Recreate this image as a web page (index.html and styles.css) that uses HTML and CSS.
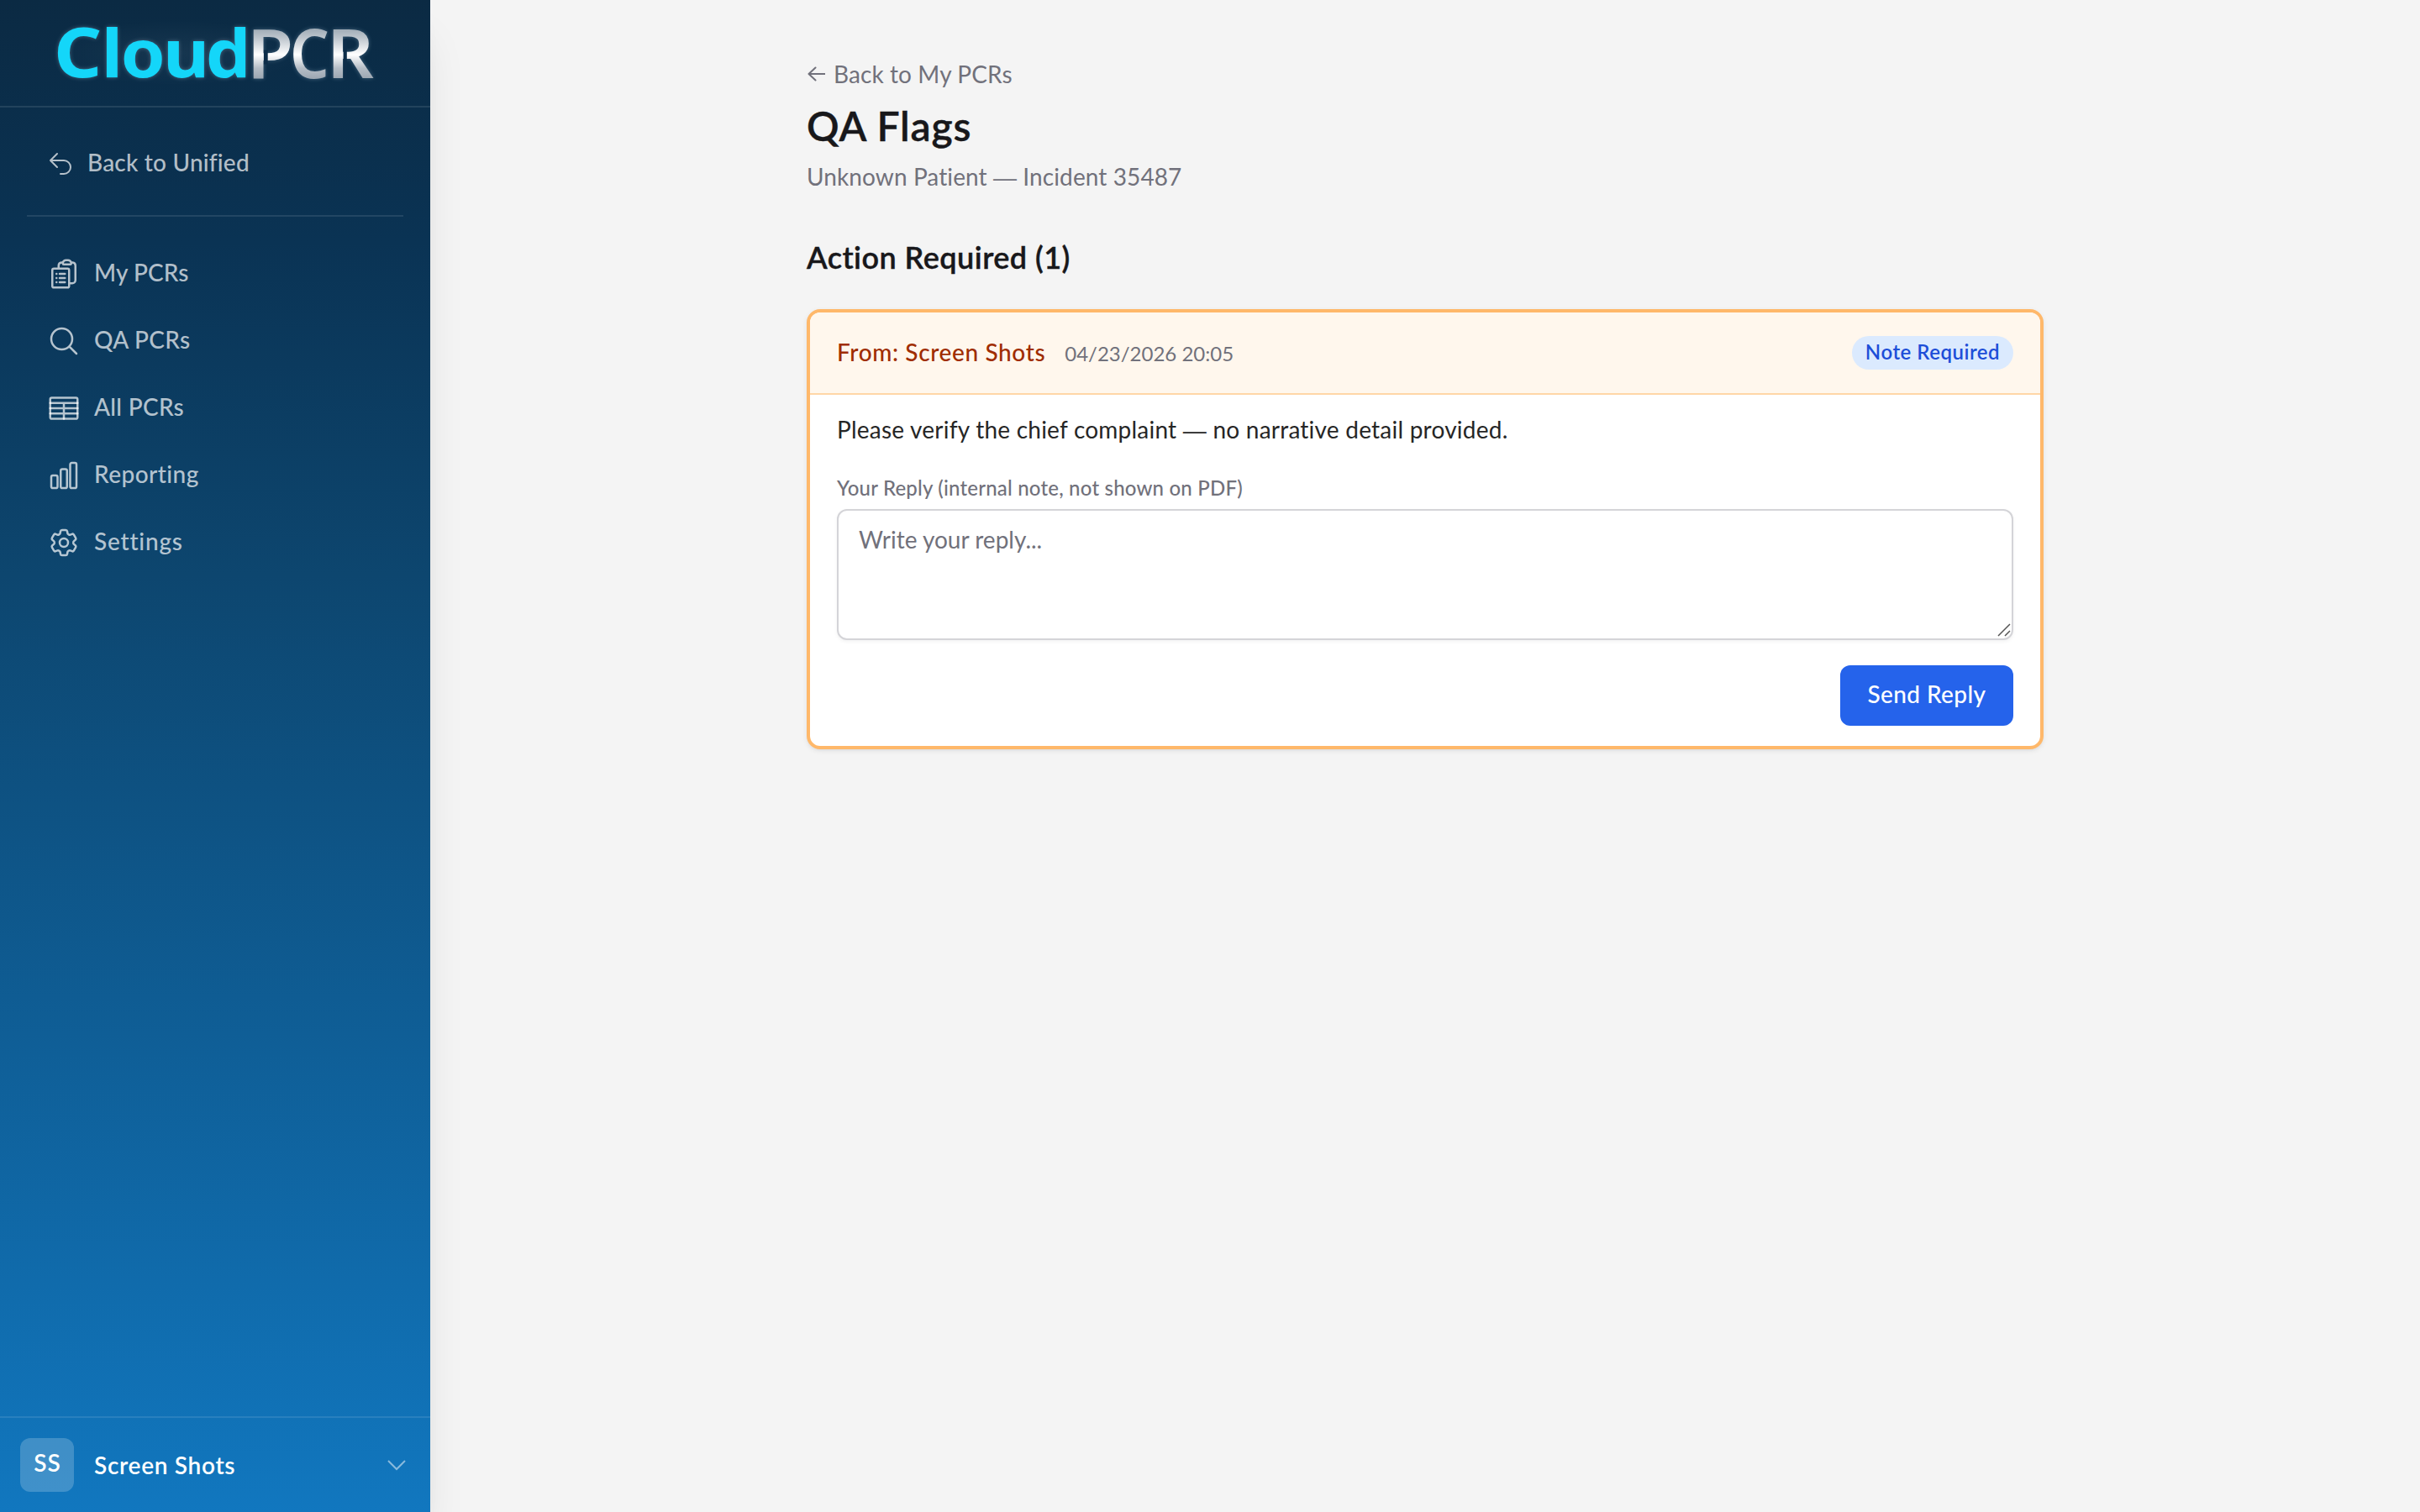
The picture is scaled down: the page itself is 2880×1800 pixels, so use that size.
FILE: index.html
```html
<!DOCTYPE html>
<html lang="en">
<head>
<meta charset="utf-8">
<title>QA Flags</title>
<link rel="stylesheet" href="styles.css">
</head>
<body>
<div class="app">
  <aside class="sidebar">
    <div class="brand">
      <svg class="logo" width="512" height="126" viewBox="0 0 512 126" role="img" aria-label="CloudPCR">
        <defs>
          <linearGradient id="steel" gradientUnits="userSpaceOnUse" x1="0" y1="-57" x2="0" y2="0">
            <stop offset="0" stop-color="#a3aeb8"/>
            <stop offset=".2" stop-color="#c3cad1"/>
            <stop offset=".52" stop-color="#ffffff"/>
            <stop offset=".8" stop-color="#b5bdc6"/>
            <stop offset="1" stop-color="#9fa9b4"/>
          </linearGradient>
          <radialGradient id="haze">
            <stop offset="0" stop-color="#fff" stop-opacity=".05"/>
            <stop offset="1" stop-color="#fff" stop-opacity="0"/>
          </radialGradient>
        </defs>
        <rect x="60" y="24" width="300" height="78" fill="url(#haze)"/>
        <g class="logo-glow">
          <text class="logo-cloud" transform="translate(0 92.3) scale(1.08 1)" x="59.3 111.8 133.1 179.6 226.7" y="0"><tspan class="logo-initial">C</tspan>loud</text>
          <g class="logo-pcr" fill="url(#steel)">
            <text transform="translate(293.8 92.5) scale(1.12 1)">P</text>
            <text transform="translate(345 92.5) scale(.91 1)">C</text>
            <text transform="translate(388.9 92.5) scale(1.08 1)">R</text>
          </g>
        </g>
        <path class="logo-notch" d="M313.9 59.5h4.8v17h-4.8zM408.6 46.5h4.2v47h-4.2z"/>
      </svg>
    </div>
    <a class="back-item">
      <svg class="icon icon-sm" viewBox="0 0 24 24"><path d="M9 15 3 9m0 0 6-6M3 9h12a6 6 0 0 1 0 12h-3"/></svg>
      <span class="label ls-unified">Back to Unified</span>
    </a>
    <nav class="nav">
      <a class="nav-item">
        <svg class="icon" viewBox="0 0 24 24"><path d="M9 12h3.75M9 15h3.75M9 18h3.75m3 .75H18a2.25 2.25 0 0 0 2.25-2.25V6.108c0-1.135-.845-2.098-1.976-2.192a48.424 48.424 0 0 0-1.123-.08m-5.801 0c-.065.21-.1.433-.1.664 0 .414.336.75.75.75h4.5a.75.75 0 0 0 .75-.75 2.25 2.25 0 0 0-.1-.664m-5.8 0A2.251 2.251 0 0 1 13.5 2.25H15c1.012 0 1.867.668 2.15 1.586m-5.8 0c-.376.023-.75.05-1.124.08C9.095 4.01 8.25 4.973 8.25 6.108V8.25m0 0H4.875c-.621 0-1.125.504-1.125 1.125v11.25c0 .621.504 1.125 1.125 1.125h9.75c.621 0 1.125-.504 1.125-1.125V9.375c0-.621-.504-1.125-1.125-1.125H8.25ZM6.75 12h.008v.008H6.75V12Zm0 3h.008v.008H6.75V15Zm0 3h.008v.008H6.75V18Z"/></svg>
        <span class="label ls-my">My PCRs</span>
      </a>
      <a class="nav-item">
        <svg class="icon" viewBox="0 0 24 24"><path d="m21 21-5.197-5.197m0 0A7.5 7.5 0 1 0 5.196 5.196a7.5 7.5 0 0 0 10.607 10.607Z"/></svg>
        <span class="label ls-qa">QA PCRs</span>
      </a>
      <a class="nav-item">
        <svg class="icon" viewBox="0 0 24 24"><rect x="2.25" y="4.5" width="19.5" height="15" rx="1.125"/><path d="M2.25 8.25h19.5M2.25 12h19.5M2.25 15.75h19.5M12 8.25V19.5"/></svg>
        <span class="label ls-all">All PCRs</span>
      </a>
      <a class="nav-item">
        <svg class="icon" viewBox="0 0 24 24"><path d="M3 13.125C3 12.504 3.504 12 4.125 12h2.25c.621 0 1.125.504 1.125 1.125v6.75C7.5 20.496 6.996 21 6.375 21h-2.25A1.125 1.125 0 0 1 3 19.875v-6.75ZM9.75 8.625c0-.621.504-1.125 1.125-1.125h2.25c.621 0 1.125.504 1.125 1.125v11.25c0 .621-.504 1.125-1.125 1.125h-2.25a1.125 1.125 0 0 1-1.125-1.125V8.625ZM16.5 4.125c0-.621.504-1.125 1.125-1.125h2.25C20.496 3 21 3.504 21 4.125v15.75c0 .621-.504 1.125-1.125 1.125h-2.25a1.125 1.125 0 0 1-1.125-1.125V4.125Z"/></svg>
        <span class="label ls-rep">Reporting</span>
      </a>
      <a class="nav-item">
        <svg class="icon" viewBox="0 0 24 24"><path d="M9.594 3.94c.09-.542.56-.94 1.11-.94h2.593c.55 0 1.02.398 1.11.94l.213 1.281c.063.374.313.686.645.87.074.04.147.083.22.127.325.196.72.257 1.075.124l1.217-.456a1.125 1.125 0 0 1 1.37.49l1.296 2.247a1.125 1.125 0 0 1-.26 1.431l-1.003.827c-.293.241-.438.613-.43.992a7.723 7.723 0 0 1 0 .255c-.008.378.137.75.43.991l1.004.827c.424.35.534.955.26 1.43l-1.298 2.247a1.125 1.125 0 0 1-1.369.491l-1.217-.456c-.355-.133-.75-.072-1.076.124a6.47 6.47 0 0 1-.22.128c-.331.183-.581.495-.644.869l-.213 1.281c-.09.543-.56.94-1.11.94h-2.594c-.55 0-1.019-.398-1.11-.94l-.213-1.281c-.062-.374-.312-.686-.644-.87a6.52 6.52 0 0 1-.22-.127c-.325-.196-.72-.257-1.076-.124l-1.217.456a1.125 1.125 0 0 1-1.369-.49l-1.297-2.247a1.125 1.125 0 0 1 .26-1.431l1.004-.827c.292-.24.437-.613.43-.991a6.932 6.932 0 0 1 0-.255c.007-.38-.138-.751-.43-.992l-1.004-.827a1.125 1.125 0 0 1-.26-1.43l1.297-2.247a1.125 1.125 0 0 1 1.37-.491l1.216.456c.356.133.751.072 1.076-.124.072-.044.146-.086.22-.128.332-.183.582-.495.644-.869l.214-1.28Z"/><circle cx="12" cy="12" r="3"/></svg>
        <span class="label ls-set">Settings</span>
      </a>
    </nav>
    <div class="profile">
      <span class="avatar">SS</span>
      <span class="profile-name">Screen Shots</span>
      <svg class="chevron" viewBox="0 0 24 24"><path d="m19.5 8.25-7.5 7.5-7.5-7.5"/></svg>
    </div>
  </aside>

  <main class="main">
    <div class="column">
      <a class="back-link">
        <svg class="arrow" width="22" height="20" viewBox="0 0 22 20"><path d="M22 10H3M10.5 2.5 2.5 10l8 7.5"/></svg>
        <span>Back to My PCRs</span>
      </a>
      <h1 class="title">QA Flags</h1>
      <p class="subtitle">Unknown Patient <span class="dash">—</span> Incident 35487</p>
      <h2 class="section">Action Required (1)</h2>
      <section class="card">
        <header class="card-head">
          <div class="meta">
            <span class="from">From: Screen Shots</span>
            <time class="date">04/23/2026 20:05</time>
          </div>
          <span class="badge">Note Required</span>
        </header>
        <div class="card-body">
          <p class="message">Please verify the chief complaint <span class="dash">—</span> no narrative detail provided.</p>
          <label class="reply-label" for="reply">Your Reply (internal note, not shown on PDF)</label>
          <div class="field">
            <textarea class="reply" id="reply" placeholder="Write your reply..."></textarea>
            <svg class="grip" width="16" height="16" viewBox="0 0 16 16"><path d="M1 15 15 1M9 15l6-6"/></svg>
          </div>
          <div class="actions"><button class="send" type="button">Send Reply</button></div>
        </div>
      </section>
    </div>
  </main>
</div>
</body>
</html>
```
FILE: styles.css
```css
* { box-sizing: border-box; }
body {
  margin: 0;
  background: #f4f4f4;
  color: #18181b;
  font: 400 28px/40px Lato, "Open Sans", sans-serif;
}
h1, h2, p { margin: 0; }
.app { display: flex; height: 1800px; overflow: hidden; }

/* Sidebar */
.sidebar {
  flex: none;
  display: flex;
  flex-direction: column;
  width: 512px;
  background: linear-gradient(#0b2a43 0%, #0a3354 16%, #0d466f 38%, #1177bf 100%);
  box-shadow: 0 40px 50px -10px rgba(0, 0, 0, .1), 0 16px 20px -12px rgba(0, 0, 0, .1);
  color: rgba(255, 255, 255, .7);
}
.brand { height: 128px; border-bottom: 2px solid rgba(255, 255, 255, .1); }
.logo { display: block; }
.logo-glow { filter: drop-shadow(0 0 2.5px rgba(200, 230, 250, .3)); }
.logo-cloud { font: 700 78.5px "Noto Sans", sans-serif; fill: #14d6f9; }
.logo-initial { font-size: 82.5px; }
.logo-pcr { font: 600 80.5px "Noto Sans", sans-serif; }
.logo-notch { fill: #0d2d49; }
.back-item {
  display: flex;
  align-items: center;
  gap: 16px;
  height: 130px;
  margin: 0 32px;
  padding: 6px 24px 0;
  border-bottom: 2px solid rgba(255, 255, 255, .1);
}
.nav { display: flex; flex-direction: column; gap: 16px; flex: 1; padding: 36px 32px; }
.nav-item { display: flex; align-items: center; gap: 16px; height: 64px; padding: 0 24px; }
.icon {
  flex: none;
  width: 40px;
  height: 40px;
  fill: none;
  stroke: currentColor;
  stroke-width: 1.5;
  stroke-linecap: round;
  stroke-linejoin: round;
}
.icon-sm { width: 32px; height: 32px; }
.label { padding-bottom: 5px; font-weight: 500; }
.ls-unified { padding-bottom: 4px; letter-spacing: .2px; }
.ls-my { letter-spacing: .1px; }
.ls-qa { letter-spacing: .3px; }
.ls-all { letter-spacing: .3px; }
.ls-rep { letter-spacing: .45px; }
.ls-set { letter-spacing: .8px; }
.profile {
  display: flex;
  align-items: center;
  height: 114px;
  padding: 0 24px 0;
  border-top: 2px solid rgba(255, 255, 255, .1);
  color: #fff;
  font-weight: 600;
}
.avatar {
  width: 64px;
  height: 64px;
  padding-left: 1px;
  border-radius: 12px;
  background: rgba(255, 255, 255, .2);
  line-height: 59px;
  letter-spacing: 1px;
  text-align: center;
}
.profile-name { flex: 1; margin-left: 24px; padding-bottom: 1px; letter-spacing: .7px; }
.chevron { width: 32px; height: 32px; fill: none; stroke: rgba(255, 255, 255, .5); stroke-width: 1.5; }

/* Content */
.main { flex: 1; display: flex; justify-content: center; padding-top: 68px; }
.column { width: 1472px; }
.back-link { display: flex; align-items: center; gap: 10px; color: #71717b; letter-spacing: .1px; }
.arrow { fill: none; stroke: currentColor; stroke-width: 2; stroke-linecap: round; stroke-linejoin: round; }
.title, .section { font-weight: 600; -webkit-text-stroke: .4px currentColor; }
.title { margin-top: 10px; font-size: 48px; line-height: 64px; letter-spacing: .85px; }
.subtitle { margin-top: 8px; color: #71717b; letter-spacing: .1px; }
.dash { font-family: "Liberation Sans", sans-serif; line-height: 1; }
.section { margin-top: 48px; font-size: 36px; line-height: 56px; letter-spacing: .47px; }
.card {
  margin-top: 34px;
  border: 4px solid #ffb86a;
  border-radius: 16px;
  background: #fff;
  box-shadow: 0 2px 6px rgba(0, 0, 0, .07), 0 2px 4px -2px rgba(0, 0, 0, .07);
}
.card-head {
  display: flex;
  align-items: center;
  justify-content: space-between;
  height: 98px;
  padding: 0 32px;
  border-bottom: 2px solid #ffd6a7;
  border-radius: 12px 12px 0 0;
  background: #fff7ed;
}
.meta { display: flex; align-items: baseline; gap: 23px; }
.from { color: #9f2d00; font-weight: 500; letter-spacing: .63px; }
.date { color: #71717b; font-size: 24px; }
.badge {
  width: 192px;
  height: 40px;
  border-radius: 20px;
  background: #dbeafe;
  color: #1d4ed8;
  font-size: 24px;
  line-height: 38px;
  font-weight: 600;
  letter-spacing: .5px;
  text-align: center;
}
.card-body { display: flex; flex-direction: column; padding: 21px 32px 24px; }
.message { color: #262626; letter-spacing: .23px; }
.reply-label { margin-top: 32px; color: #71717b; font-size: 24px; line-height: 36px; font-weight: 500; letter-spacing: .2px; }
.field { position: relative; margin-top: 7px; }
.reply {
  display: block;
  width: 100%;
  height: 156px;
  padding: 14px 24px;
  border: 2px solid #d4d4d8;
  border-radius: 12px;
  background: #fff;
  box-shadow: 0 2px 4px rgba(0, 0, 0, .05);
  font: inherit;
  resize: none;
}
.reply::placeholder { color: #71717b; opacity: 1; }
.grip { position: absolute; right: 3px; bottom: 4px; fill: none; stroke: #555; stroke-width: 1.5; }
.actions { display: flex; justify-content: flex-end; margin-top: 30px; }
.send {
  width: 206px;
  height: 72px;
  padding: 0 0 5px;
  border: 0;
  border-radius: 12px;
  background: #2563eb;
  color: #fff;
  font: inherit;
  font-weight: 500;
  letter-spacing: .4px;
}
```
